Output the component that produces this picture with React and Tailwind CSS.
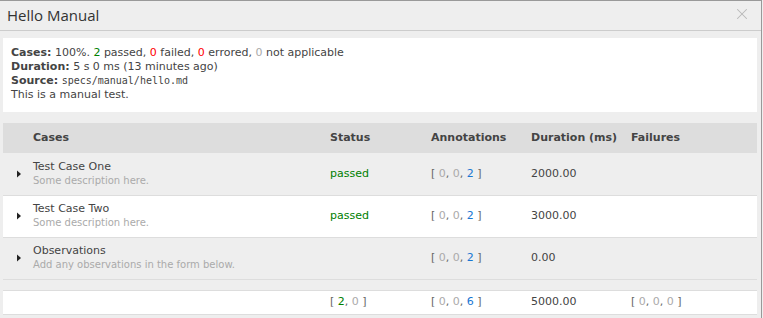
import { X } from 'lucide-react';

const rows = [
  { name: 'Test Case One', desc: 'Some description here.', status: 'passed', dur: '2000.00', bg: 'bg-[#eeeeee]' },
  { name: 'Test Case Two', desc: 'Some description here.', status: 'passed', dur: '3000.00', bg: 'bg-white' },
  { name: 'Observations', desc: 'Add any observations in the form below.', status: '', dur: '0.00', bg: 'bg-[#eeeeee]' },
];

function Caret() {
  return (
    <svg width="5" height="8" viewBox="0 0 5 8" className="ml-[14px]">
      <path d="M0 0.5 L4 4 L0 7.5 Z" fill="#222" />
    </svg>
  );
}

function Triple({ a, b, c }) {
  return (
    <span className="text-[#666]">
      [ <span className="text-[#aaa]">{a}</span>, <span className="text-[#aaa]">{b}</span>,{' '}
      <span className={c === 0 ? 'text-[#aaa]' : 'text-[#1976d2]'}>{c}</span> ]
    </span>
  );
}

export default function App() {
  return (
    <div className="w-[763px] h-[318px] bg-[#eeeeee] overflow-hidden font-['DejaVu_Sans',Verdana,sans-serif] text-[#444]">
      <div className="w-[762px] h-[318px] border-t border-r border-[#999] bg-[#eeeeee] flex flex-col">
        <div className="h-[30px] border-b border-[#cccccc] flex items-center justify-between pl-[7px] pr-[10px]">
          <span className="text-[15px] text-[#333] font-['Open_Sans',sans-serif]">Hello Manual</span>
          <X size={18} strokeWidth={1.4} className="text-[#b8b8b8] -mt-[3px]" />
        </div>

        <div className="pl-[3px] pr-[4px] pt-[7px]">
          <div className="bg-white h-[74px] pl-[8px] pt-[8px] text-[11px] leading-[14px]">
            <div>
              <b>Cases:</b> 100%. <span className="text-[#008000]">2</span> passed,{' '}
              <span className="text-[#ff0000]">0</span> failed, <span className="text-[#ff0000]">0</span> errored,{' '}
              <span className="text-[#aaa]">0</span> not applicable
            </div>
            <div>
              <b>Duration:</b> 5 s 0 ms (13 minutes ago)
            </div>
            <div>
              <b>Source:</b> <span className="font-['DejaVu_Sans_Mono',monospace] text-[10px]">specs/manual/hello.md</span>
            </div>
            <div>This is a manual test.</div>
          </div>

          <table className="mt-[11px] w-[754px] table-fixed border-collapse text-[11px]">
            <colgroup>
              <col className="w-[30px]" />
              <col className="w-[297px]" />
              <col className="w-[101px]" />
              <col className="w-[100px]" />
              <col className="w-[100px]" />
              <col />
            </colgroup>
            <thead>
              <tr className="h-[30px] bg-[#dddddd] text-left text-[#444]">
                <th></th>
                <th className="font-bold">Cases</th>
                <th className="font-bold">Status</th>
                <th className="font-bold">Annotations</th>
                <th className="font-bold">Duration (ms)</th>
                <th className="font-bold">Failures</th>
              </tr>
            </thead>
            <tbody>
              {rows.map((r) => (
                <tr key={r.name} className={`h-[42px] border-b border-[#dddddd] ${r.bg}`}>
                  <td className="align-middle"><Caret /></td>
                  <td className="align-middle">
                    <div className="text-[11px] leading-[14px] text-[#444]">{r.name}</div>
                    <div className="text-[10px] leading-[14px] text-[#aaa]">{r.desc}</div>
                  </td>
                  <td className="text-[#008000]">{r.status}</td>
                  <td><Triple a={0} b={0} c={2} /></td>
                  <td>{r.dur}</td>
                  <td></td>
                </tr>
              ))}
              <tr className="h-[11px] bg-[#eeeeee] border-b border-[#dddddd]">
                <td colSpan={6}></td>
              </tr>
              <tr className="h-[24px] bg-white border-b border-[#dddddd]">
                <td></td>
                <td></td>
                <td className="text-[#666]">
                  [ <span className="text-[#008000]">2</span>, <span className="text-[#aaa]">0</span> ]
                </td>
                <td><Triple a={0} b={0} c={6} /></td>
                <td>5000.00</td>
                <td><Triple a={0} b={0} c={0} /></td>
              </tr>
            </tbody>
          </table>
        </div>
      </div>
    </div>
  );
}
